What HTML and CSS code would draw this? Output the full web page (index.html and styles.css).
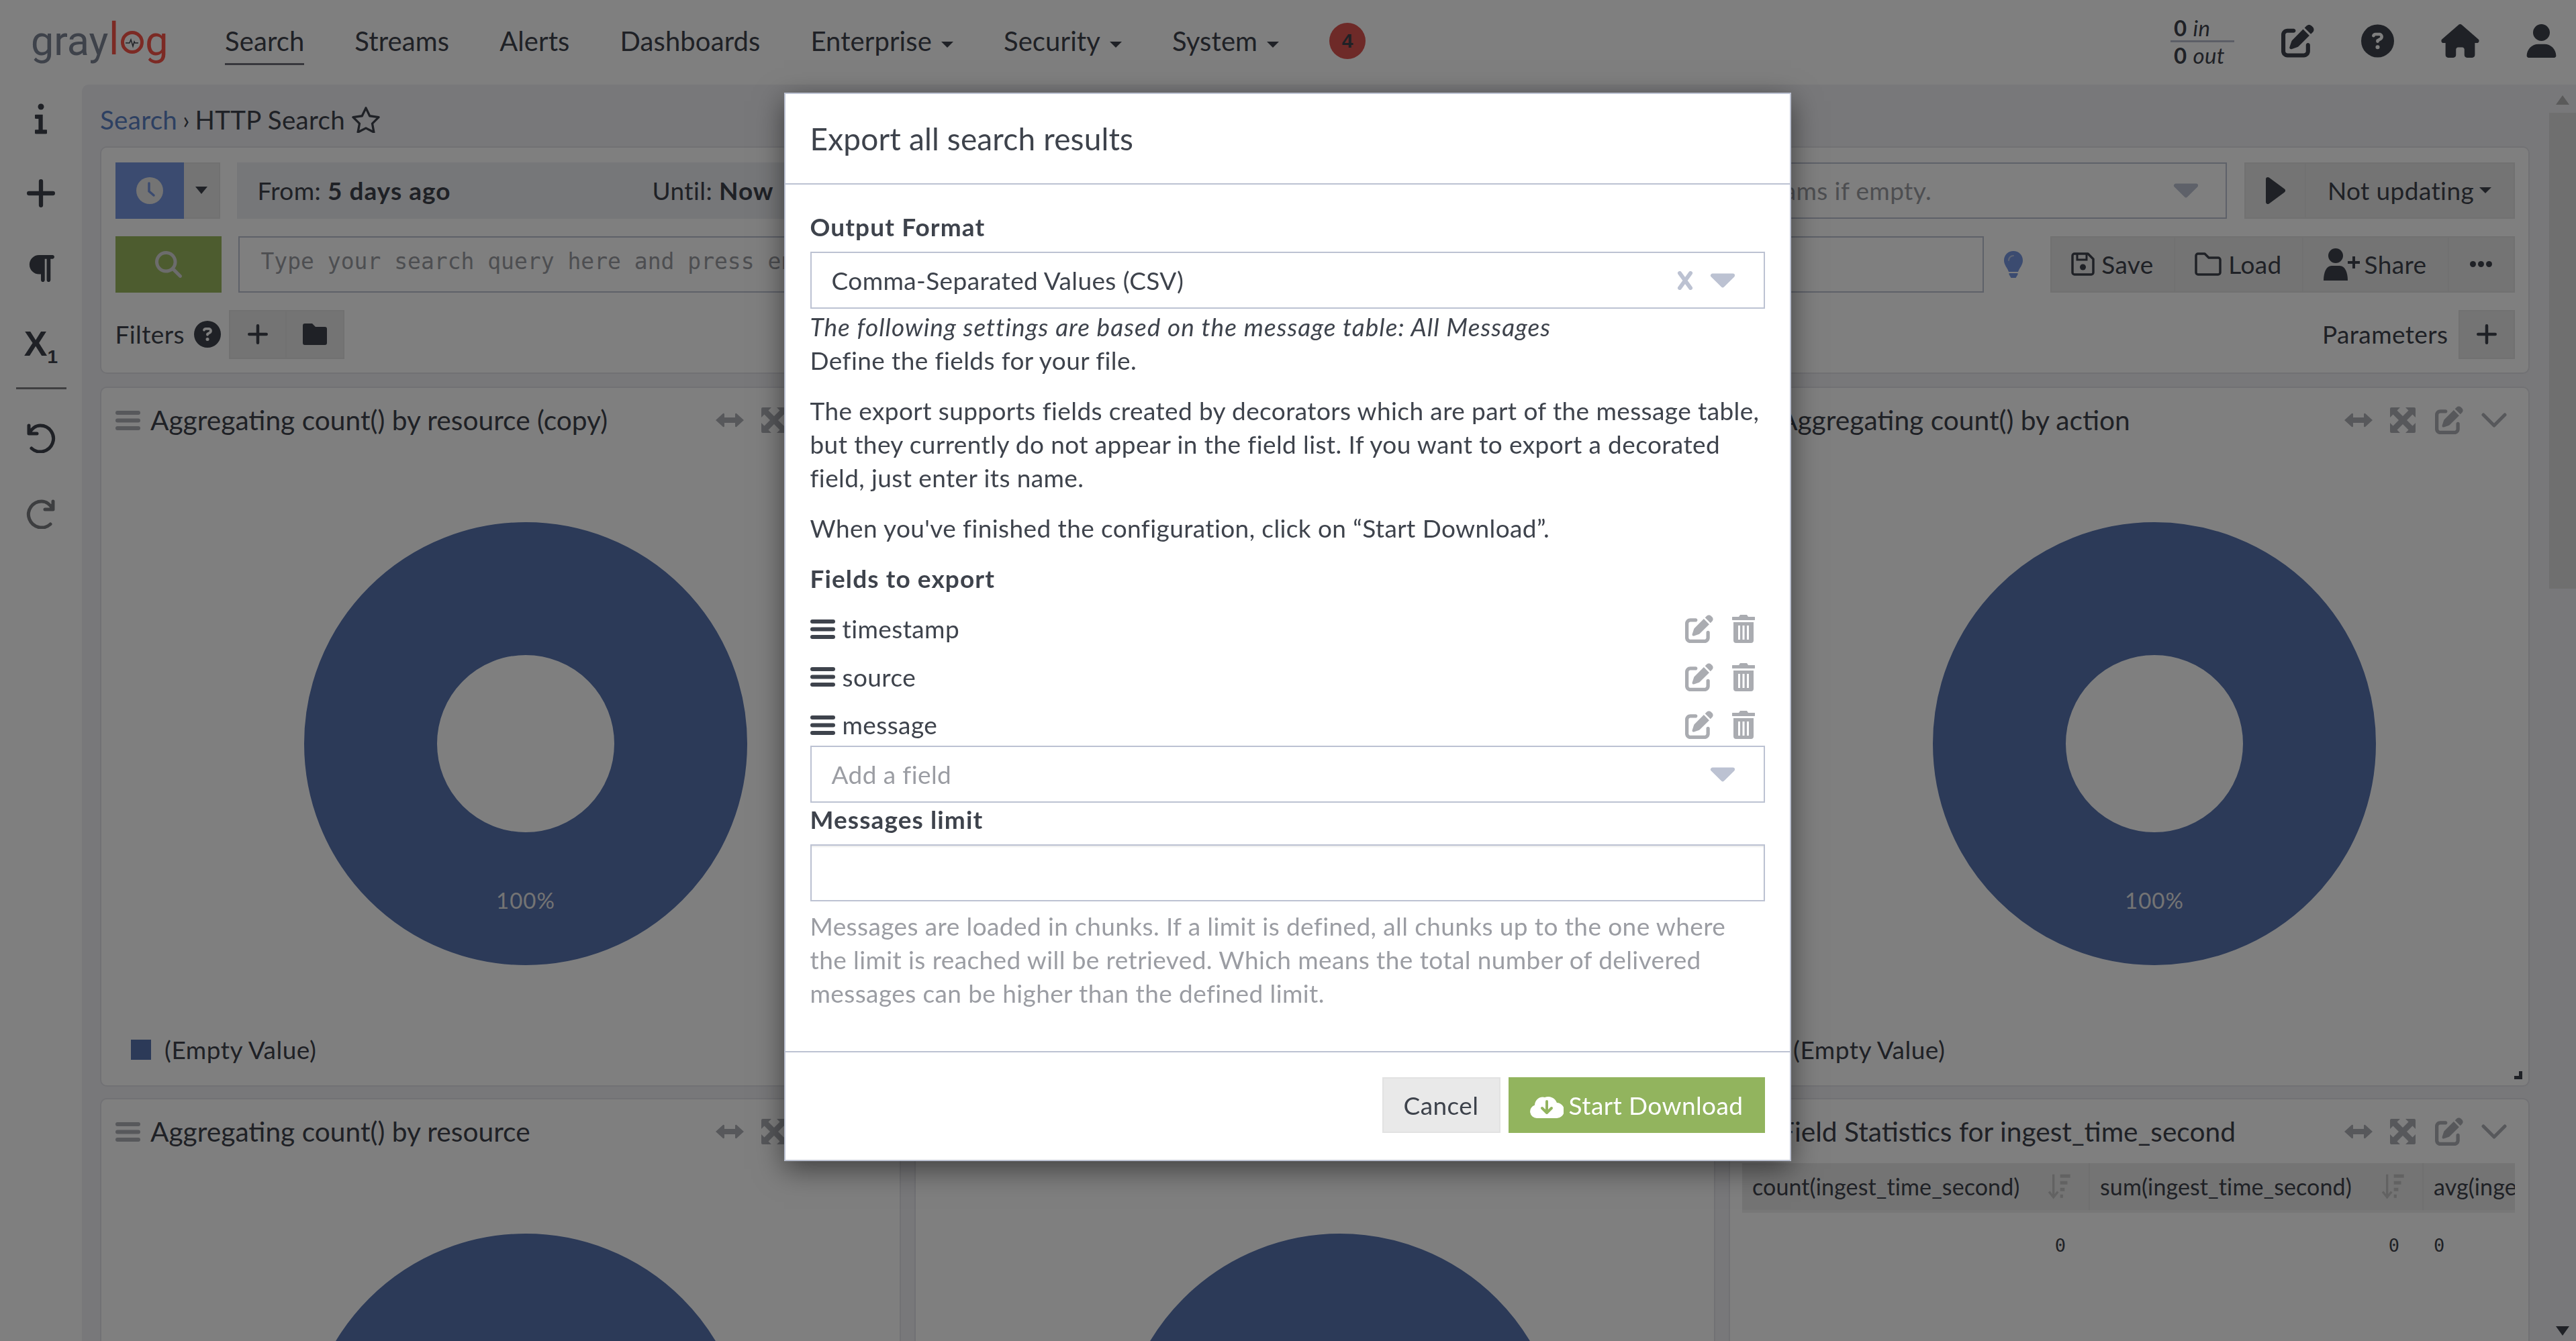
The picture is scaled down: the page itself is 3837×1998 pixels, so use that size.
FILE: index.html
```html
<!DOCTYPE html>
<html lang="en">
<head>
    <meta charset="UTF-8">
    <title>Graylog - HTTP Search</title>
    <link rel="stylesheet" href="styles.css">
</head>
<body>
    <svg class="sprite" xmlns="http://www.w3.org/2000/svg">
        <symbol id="i-edit" viewBox="0 0 512 512"><path d="M471.6 21.7c-21.9-21.9-57.3-21.9-79.2 0L362.3 51.7l97.9 97.9 30.1-30.1c21.9-21.9 21.9-57.3 0-79.2L471.6 21.7zm-299.2 220c-6.1 6.1-10.8 13.6-13.5 21.9l-29.6 88.8c-2.9 8.6-.6 18.1 5.8 24.6s15.9 8.7 24.6 5.8l88.8-29.6c8.2-2.7 15.7-7.4 21.9-13.5L437.7 172.3 339.7 74.3 172.4 241.7zM96 64C43 64 0 107 0 160V416c0 53 43 96 96 96H352c53 0 96-43 96-96V320c0-17.7-14.3-32-32-32s-32 14.3-32 32v96c0 17.7-14.3 32-32 32H96c-17.7 0-32-14.3-32-32V160c0-17.7 14.3-32 32-32h96c17.7 0 32-14.3 32-32s-14.3-32-32-32H96z"/></symbol>
        <symbol id="i-help" viewBox="0 0 512 512"><path d="M256 512A256 256 0 1 0 256 0a256 256 0 1 0 0 512zM169.8 165.3c7.9-22.3 29.1-37.3 52.8-37.3h58.3c34.9 0 63.1 28.3 63.1 63.1c0 22.6-12.1 43.5-31.7 54.8L280 264.4c-.2 13-10.9 23.6-24 23.6c-13.3 0-24-10.7-24-24V250.5c0-8.6 4.6-16.5 12.1-20.8l44.3-25.4c4.7-2.7 7.6-7.7 7.6-13.1c0-8.4-6.8-15.1-15.1-15.1H222.6c-3.4 0-6.4 2.1-7.5 5.3l-.4 1.2c-4.4 12.5-18.2 19-30.6 14.6s-19-18.2-14.6-30.6l.4-1.2zM224 352a32 32 0 1 1 64 0 32 32 0 1 1 -64 0z"/></symbol>
        <symbol id="i-home" viewBox="0 0 576 512"><path d="M575.8 255.5c0 18-15 32.1-32 32.1h-32l.7 160.2c0 2.7-.2 5.4-.5 8.1V472c0 22.1-17.9 40-40 40H456c-1.1 0-2.2 0-3.3-.1c-1.4 .1-2.8 .1-4.2 .1H416 392c-22.1 0-40-17.9-40-40V448 384c0-17.7-14.3-32-32-32H256c-17.7 0-32 14.3-32 32v64 24c0 22.1-17.9 40-40 40H160 128.1c-1.5 0-3-.1-4.5-.2c-1.2 .1-2.4 .2-3.6 .2H104c-22.1 0-40-17.9-40-40V360c0-.9 0-1.9 .1-2.8V287.6H32c-18 0-32-14-32-32.1c0-9 3-17 10-24L266.4 8c7-7 15-8 22-8s15 2 21 7L564.8 231.5c8 7 12 15 11 24z"/></symbol>
        <symbol id="i-user" viewBox="0 0 448 512"><path d="M224 256A128 128 0 1 0 224 0a128 128 0 1 0 0 256zm-45.7 48C79.8 304 0 383.8 0 482.3C0 498.7 13.3 512 29.7 512H418.3c16.4 0 29.7-13.3 29.7-29.7C448 383.8 368.2 304 269.7 304H178.3z"/></symbol>
        <symbol id="i-search" viewBox="0 0 512 512"><path d="M416 208c0 45.9-14.9 88.3-40 122.7L502.6 457.4c12.5 12.5 12.5 32.8 0 45.3s-32.8 12.5-45.3 0L330.7 376c-34.4 25.2-76.8 40-122.7 40C93.1 416 0 322.9 0 208S93.1 0 208 0S416 93.1 416 208zM208 352a144 144 0 1 0 0-288 144 144 0 1 0 0 288z"/></symbol>
        <symbol id="i-para" viewBox="0 0 448 512"><path d="M192 32h64H416c17.7 0 32 14.3 32 32s-14.3 32-32 32H384l0 352c0 17.7-14.3 32-32 32s-32-14.3-32-32l0-352H288l0 352c0 17.7-14.3 32-32 32s-32-14.3-32-32l0-96H192c-88.4 0-160-71.6-160-160s71.6-160 160-160z"/></symbol>
        <symbol id="i-info" viewBox="0 0 40 100"><circle cx="20" cy="10" r="10"/><path d="M4 36h22v50h10a7 7 0 0 1 0 14H4a7 7 0 0 1 0-14h8V50H4a7 7 0 0 1 0-14z"/></symbol>
        <symbol id="i-plus" viewBox="0 0 40 40"><path d="M20 3v34M3 20h34" fill="none" stroke="currentColor" stroke-width="6" stroke-linecap="round"/></symbol>
        <symbol id="i-bars" viewBox="0 0 37 29"><rect width="37" height="6" rx="3"/><rect y="11.500" width="37" height="6" rx="3"/><rect y="23" width="37" height="6" rx="3"/></symbol>
        <symbol id="i-trash" viewBox="0 0 34 42"><path d="M12 0h10l2 3h9a1.500 1.500 0 0 1 0 5H1a1.500 1.500 0 0 1 0-5h9zM2 11h30v27a4 4 0 0 1-4 4H6a4 4 0 0 1-4-4zM9 16v21h3V16zm6.500 0v21h3V16zM22 16v21h3V16z" fill-rule="evenodd"/></symbol>
        <symbol id="i-arrows" viewBox="0 0 44 24"><path d="M1 12 12 2a1.500 1.500 0 0 1 2 1v5h16V3a1.500 1.500 0 0 1 2-1l11 10-11 10a1.500 1.500 0 0 1-2-1v-5H14v5a1.500 1.500 0 0 1-2 1z"/></symbol>
        <symbol id="i-expand" viewBox="0 0 38 38"><path d="M2 0h13L10.500 4.500 19 13l8.500-8.500L23 0h13a2 2 0 0 1 2 2v13l-4.500-4.500L25 19l8.500 8.500L38 23v13a2 2 0 0 1-2 2H23l4.500-4.500L19 25l-8.500 8.500L15 38H2a2 2 0 0 1-2-2V23l4.500 4.500L13 19 4.500 10.500 0 15V2a2 2 0 0 1 2-2z"/></symbol>
        <symbol id="i-chevron" viewBox="0 0 38 22"><path d="M3 3l16 16L35 3" fill="none" stroke="currentColor" stroke-width="5" stroke-linecap="round" stroke-linejoin="round"/></symbol>
        <symbol id="i-caret" viewBox="0 0 40 24"><path d="M4 4h32L20 20z" stroke="currentColor" stroke-width="6" stroke-linejoin="round"/></symbol>
        <symbol id="i-x" viewBox="0 0 24 28"><path d="M4 3l16 22M20 3L4 25" fill="none" stroke="currentColor" stroke-width="6" stroke-linecap="round"/></symbol>
        <symbol id="i-clock" viewBox="0 0 40 40"><circle cx="20" cy="20" r="20"/><path d="M19 9v12l7 6" fill="none" stroke="#7696e0" stroke-width="3.500" stroke-linecap="round"/></symbol>
        <symbol id="i-folder" viewBox="0 0 36 32"><path d="M3 0h11l5 5h14a3 3 0 0 1 3 3v21a3 3 0 0 1-3 3H3a3 3 0 0 1-3-3V3a3 3 0 0 1 3-3z"/></symbol>
        <symbol id="i-folder-o" viewBox="0 0 40 35"><path d="M5 2h10l6 6h14a3 3 0 0 1 3 3v19a3 3 0 0 1-3 3H5a3 3 0 0 1-3-3V5a3 3 0 0 1 3-3z" fill="none" stroke="currentColor" stroke-width="3.500" stroke-linejoin="round"/></symbol>
        <symbol id="i-save" viewBox="0 0 35 35"><path d="M5 2h20l8 8v20a3 3 0 0 1-3 3H5a3 3 0 0 1-3-3V5a3 3 0 0 1 3-3z" fill="none" stroke="currentColor" stroke-width="3.500" stroke-linejoin="round"/><circle cx="17.500" cy="22" r="4.500"/><path d="M9 3v8h14V3" fill="none" stroke="currentColor" stroke-width="3"/></symbol>
        <symbol id="i-share" viewBox="0 0 54 48"><circle cx="18" cy="11" r="11"/><path d="M0 48c0-12 4-22 12-22h12c8 0 12 10 12 22z"/><path d="M45 12v18M36 21h18" fill="none" stroke="currentColor" stroke-width="4"/></symbol>
        <symbol id="i-bulb" viewBox="0 0 28 40"><path d="M14 0c8 0 14 6 14 14 0 7-5 11-7 17H7C5 25 0 21 0 14 0 6 6 0 14 0z"/><path d="M7.500 33h13v2l-3 5h-7l-3-5z"/><path d="M7 14c0-4 3-7 7-7" fill="none" stroke="#bcc8e8" stroke-width="2" stroke-linecap="round"/></symbol>
        <symbol id="i-play" viewBox="0 0 30 40"><path d="M4 3l23 17L4 37z" stroke="currentColor" stroke-width="6" stroke-linejoin="round"/></symbol>
        <symbol id="i-undo" viewBox="0 0 44 44"><path d="M4 3v12h12M5 14c3-6 9-11 16-11a19.500 19.500 0 1 1-13 34" fill="none" stroke="currentColor" stroke-width="5" stroke-linecap="round" stroke-linejoin="round"/></symbol>
        <symbol id="i-redo" viewBox="0 0 44 44"><path d="M40 3v12H28M39 14c-3-6-9-11-16-11a19.500 19.500 0 1 0 13 34" fill="none" stroke="currentColor" stroke-width="5" stroke-linecap="round" stroke-linejoin="round"/></symbol>
        <symbol id="i-cloud" viewBox="0 0 50 38"><path d="M10 38A10 10 0 0 1 7 18.500 12 12 0 0 1 22 7 14 14 0 0 1 40 15 11.500 11.500 0 0 1 39 38z"/><path d="M25 13v16M18 23l7 7 7-7" fill="none" stroke="#92b45e" stroke-width="4" stroke-linecap="round" stroke-linejoin="round"/></symbol>
        <symbol id="i-sort" viewBox="0 0 40 48"><path d="M10 2v38M2 33l8 10 8-10" fill="none" stroke="currentColor" stroke-width="4"/><path d="M22 2h18v6H22zM22 14h13v6H22zM22 26h8v6h-8zM22 38h5v6h-5z"/></symbol>
    </svg>

    <div class="page">
        <nav class="navbar">
            <a class="logo"><span>gray</span><span class="logo-red logo-l">l</span><svg class="logo-o" viewBox="0 0 34 34"><circle cx="17" cy="17" r="14.500" fill="none" stroke="#f85449" stroke-width="5"/><path d="M7 18h6l2-5 3 10 2-7 1 2h5" fill="none" stroke="#3e434c" stroke-width="1.500"/></svg><span class="logo-red">g</span></a>
            <ul class="nav-items">
                <li class="active">Search</li>
                <li>Streams</li>
                <li>Alerts</li>
                <li>Dashboards</li>
                <li class="dropdown">Enterprise</li>
                <li class="dropdown">Security</li>
                <li class="dropdown">System</li>
            </ul>
            <span class="badge">4</span>
            <div class="nav-right">
                <div class="metrics">
                    <div class="metric metric-in"><b>0</b> <i>in</i></div>
                    <div class="metric"><b>0</b> <i>out</i></div>
                </div>
                <svg class="nav-icon w49"><use href="#i-edit"/></svg>
                <svg class="nav-icon w49"><use href="#i-help"/></svg>
                <svg class="nav-icon w57"><use href="#i-home"/></svg>
                <svg class="nav-icon w45"><use href="#i-user"/></svg>
            </div>
        </nav>

        <div class="below-nav">
            <aside class="sidebar">
                <svg class="side-icon side-info"><use href="#i-info"/></svg>
                <svg class="side-icon side-plus"><use href="#i-plus"/></svg>
                <svg class="side-icon side-para"><use href="#i-para"/></svg>
                <div class="side-sub">X<sub>1</sub></div>
                <hr class="side-rule">
                <svg class="side-icon side-undo"><use href="#i-undo"/></svg>
                <svg class="side-icon side-redo"><use href="#i-redo"/></svg>
            </aside>

            <main class="content">
                <div class="breadcrumb">
                    <a>Search</a>
                    <span class="crumb-sep">&rsaquo;</span>
                    <span>HTTP Search</span>
                    <svg class="star" viewBox="0 0 44 42"><path d="M22 3l6 12.500 14 2-10 10 2.500 13.500L22 34.500 9.500 41 12 27.500l-10-10 14-2z" fill="none" stroke="currentColor" stroke-width="3.500" stroke-linejoin="round"/></svg>
                </div>

                <section class="panel search-bar">
                    <div class="search-row">
                        <div class="btn-group">
                            <button class="btn btn-blue btn-clock"><svg class="ico40"><use href="#i-clock"/></svg></button>
                            <button class="btn btn-caret"><span class="caret"></span></button>
                        </div>
                        <div class="time-range">
                            <span class="time-from">From: <b>5 days ago</b></span>
                            <span>Until: <b>Now</b></span>
                        </div>
                        <div class="input stream-select">
                            <span class="placeholder">Select streams the search should include. Searches in all streams if empty.</span>
                            <svg class="select-caret"><use href="#i-caret"/></svg>
                        </div>
                        <div class="btn-group">
                            <button class="btn btn-play"><svg class="play-ico"><use href="#i-play"/></svg></button>
                            <button class="btn btn-update">Not updating<span class="caret"></span></button>
                        </div>
                    </div>
                    <div class="search-row">
                        <button class="btn btn-green"><svg class="ico40"><use href="#i-search"/></svg></button>
                        <div class="input query-input"><span class="mono">Type your search query here and press enter.</span></div>
                        <div class="bulb-cell"><svg class="bulb"><use href="#i-bulb"/></svg></div>
                        <div class="btn-group">
                            <button class="btn btn-save"><svg class="save-ico"><use href="#i-save"/></svg>Save</button>
                            <button class="btn btn-load"><svg class="load-ico"><use href="#i-folder-o"/></svg>Load</button>
                            <button class="btn btn-share"><svg class="share-ico"><use href="#i-share"/></svg>Share</button>
                            <button class="btn btn-more"><span class="dots"><i></i><i></i><i></i></span></button>
                        </div>
                    </div>
                    <div class="search-row filter-row">
                        <span>Filters</span>
                        <svg class="filter-help"><use href="#i-help"/></svg>
                        <div class="btn-group filter-group">
                            <button class="btn btn-small"><svg class="plus-ico"><use href="#i-plus"/></svg></button>
                            <button class="btn btn-small"><svg class="folder-ico"><use href="#i-folder"/></svg></button>
                        </div>
                        <span class="param-label">Parameters</span>
                        <button class="btn btn-param"><svg class="plus-ico"><use href="#i-plus"/></svg></button>
                    </div>
                </section>

                <div class="widgets">
                    <article class="panel widget">
                        <header class="widget-head">
                            <svg class="drag"><use href="#i-bars"/></svg>
                            <h3>Aggregating count() by resource (copy)</h3>
                            <div class="widget-tools">
                                <svg class="t-arrows"><use href="#i-arrows"/></svg>
                                <svg class="t-expand"><use href="#i-expand"/></svg>
                                <svg class="t-edit"><use href="#i-edit"/></svg>
                                <svg class="t-chevron"><use href="#i-chevron"/></svg>
                            </div>
                        </header>
                        <svg class="donut" viewBox="0 0 660 660"><circle cx="330" cy="330" r="231" fill="none" stroke="#5874b0" stroke-width="198"/><text x="330" y="576" text-anchor="middle">100%</text></svg>
                        <div class="legend"><span class="legend-box"></span>(Empty Value)</div>
                    </article>
                    <article class="panel widget">
                        <header class="widget-head"></header>
                        <svg class="donut" viewBox="0 0 660 660"><circle cx="330" cy="330" r="231" fill="none" stroke="#5874b0" stroke-width="198"/></svg>
                    </article>
                    <article class="panel widget">
                        <header class="widget-head">
                            <svg class="drag"><use href="#i-bars"/></svg>
                            <h3>Aggregating count() by action</h3>
                            <div class="widget-tools">
                                <svg class="t-arrows"><use href="#i-arrows"/></svg>
                                <svg class="t-expand"><use href="#i-expand"/></svg>
                                <svg class="t-edit"><use href="#i-edit"/></svg>
                                <svg class="t-chevron"><use href="#i-chevron"/></svg>
                            </div>
                        </header>
                        <svg class="donut" viewBox="0 0 660 660"><circle cx="330" cy="330" r="231" fill="none" stroke="#5874b0" stroke-width="198"/><text x="330" y="576" text-anchor="middle">100%</text></svg>
                        <div class="legend"><span class="legend-box"></span>(Empty Value)</div>
                        <span class="resize-handle"></span>
                    </article>
                    <article class="panel widget">
                        <header class="widget-head">
                            <svg class="drag"><use href="#i-bars"/></svg>
                            <h3>Aggregating count() by resource</h3>
                            <div class="widget-tools">
                                <svg class="t-arrows"><use href="#i-arrows"/></svg>
                                <svg class="t-expand"><use href="#i-expand"/></svg>
                                <svg class="t-edit"><use href="#i-edit"/></svg>
                                <svg class="t-chevron"><use href="#i-chevron"/></svg>
                            </div>
                        </header>
                        <svg class="donut" viewBox="0 0 660 660"><circle cx="330" cy="330" r="231" fill="none" stroke="#5874b0" stroke-width="198"/></svg>
                    </article>
                    <article class="panel widget">
                        <header class="widget-head"></header>
                        <svg class="donut" viewBox="0 0 660 660"><circle cx="330" cy="330" r="231" fill="none" stroke="#5874b0" stroke-width="198"/></svg>
                    </article>
                    <article class="panel widget">
                        <header class="widget-head">
                            <svg class="drag"><use href="#i-bars"/></svg>
                            <h3>Field Statistics for ingest_time_second</h3>
                            <div class="widget-tools">
                                <svg class="t-arrows"><use href="#i-arrows"/></svg>
                                <svg class="t-expand"><use href="#i-expand"/></svg>
                                <svg class="t-edit"><use href="#i-edit"/></svg>
                                <svg class="t-chevron"><use href="#i-chevron"/></svg>
                            </div>
                        </header>
                        <div class="stats">
                            <div class="stats-head">
                                <div class="stats-cell c1">count(ingest_time_second)<svg class="sort"><use href="#i-sort"/></svg></div>
                                <div class="stats-cell c2">sum(ingest_time_second)<svg class="sort"><use href="#i-sort"/></svg></div>
                                <div class="stats-cell c3">avg(ingest_time_second)</div>
                            </div>
                            <div class="stats-row">
                                <div class="stats-val c1">0</div>
                                <div class="stats-val c2">0</div>
                                <div class="stats-val c3">0</div>
                            </div>
                        </div>
                    </article>
                </div>
            </main>

            <div class="scrollbar">
                <span class="scroll-up"></span>
                <span class="scroll-thumb"></span>
                <span class="scroll-down"></span>
            </div>
        </div>
    </div>

    <div class="backdrop"></div>

    <div class="modal">
        <div class="modal-header"><h4>Export all search results</h4></div>
        <div class="modal-body">
            <label class="field-label">Output Format</label>
            <div class="input select">
                <span>Comma-Separated Values (CSV)</span>
                <svg class="select-x"><use href="#i-x"/></svg>
                <svg class="select-caret"><use href="#i-caret"/></svg>
            </div>
            <p class="intro"><i>The following settings are based on the message table: All Messages</i><br>Define the fields for your file.</p>
            <p>The export supports fields created by decorators which are part of the message table,<br>but they currently do not appear in the field list. If you want to export a decorated<br>field, just enter its name.</p>
            <p>When you've finished the configuration, click on “Start Download”.</p>
            <label class="field-label fields-label">Fields to export</label>
            <div class="field-row">
                <svg class="field-bars"><use href="#i-bars"/></svg><span>timestamp</span>
                <svg class="field-edit"><use href="#i-edit"/></svg><svg class="field-trash"><use href="#i-trash"/></svg>
            </div>
            <div class="field-row">
                <svg class="field-bars"><use href="#i-bars"/></svg><span>source</span>
                <svg class="field-edit"><use href="#i-edit"/></svg><svg class="field-trash"><use href="#i-trash"/></svg>
            </div>
            <div class="field-row">
                <svg class="field-bars"><use href="#i-bars"/></svg><span>message</span>
                <svg class="field-edit"><use href="#i-edit"/></svg><svg class="field-trash"><use href="#i-trash"/></svg>
            </div>
            <div class="input select add-field">
                <span class="placeholder">Add a field</span>
                <svg class="select-caret"><use href="#i-caret"/></svg>
            </div>
            <label class="field-label">Messages limit</label>
            <div class="input limit-input"></div>
            <p class="help">Messages are loaded in chunks. If a limit is defined, all chunks up to the one where<br>the limit is reached will be retrieved. Which means the total number of delivered<br>messages can be higher than the defined limit.</p>
        </div>
        <div class="modal-footer">
            <button class="btn btn-cancel">Cancel</button>
            <button class="btn btn-download"><svg class="cloud"><use href="#i-cloud"/></svg>Start Download</button>
        </div>
    </div>
</body>
</html>
```

FILE: styles.css
```css
:root {
    --text: #3e434c;
    --line: #bcc2d2;
    --btn: #e9e9e9;
    --btn-line: #e2e2e2;
    --muted: #9b9da3;
    --blue: #5874b0;
    --tool: #aeb0b6;
}

* {
    box-sizing: border-box;
}

html, body {
    margin: 0;
    height: 1998px;
    overflow: hidden;
}

body {
    font-family: "Lato", "Noto Sans", sans-serif;
    font-size: 37px;
    line-height: 50px;
    letter-spacing: 0.4px;
    color: var(--text);
    background: #fff;
}

b {
    letter-spacing: 1px;
}

.sprite {
    display: none;
}

svg {
    fill: currentColor;
    flex: none;
}

button {
    font: inherit;
    letter-spacing: inherit;
    color: inherit;
}

/* navbar */
.navbar {
    height: 126px;
    display: flex;
    align-items: center;
    padding: 0 29px 4px 46px;
    background: #fff;
}

.logo {
    display: flex;
    align-items: center;
    width: 202px;
    margin-right: 87px;
    font-family: "Roboto", sans-serif;
    font-size: 61px;
    line-height: 64px;
    letter-spacing: 0;
    color: #7d8494;
}

.logo-red {
    color: #f85449;
}

.logo-l {
    margin-left: 1px;
    transform: scaleY(1.08);
    transform-origin: bottom;
}

.logo-o {
    width: 34px;
    height: 34px;
    margin: 3px 2px 0 3px;
}

.nav-items {
    display: flex;
    gap: 75px;
    list-style: none;
    margin: 0;
    padding: 0;
    font-size: 40px;
    letter-spacing: 0.1px;
}

.nav-items li {
    height: 72px;
    padding-top: 11px;
    white-space: nowrap;
}

.nav-items .active {
    border-bottom: 3px solid #6e6e78;
}

.dropdown::after {
    content: '';
    display: inline-block;
    margin-left: 14px;
    vertical-align: 5px;
    border-top: 9px solid currentColor;
    border-left: 9px solid transparent;
    border-right: 9px solid transparent;
}

.badge {
    width: 54px;
    height: 54px;
    margin-left: 75px;
    border-radius: 50%;
    background: #dc5450;
    font-family: "Liberation Sans", sans-serif;
    font-weight: 700;
    font-size: 30px;
    line-height: 54px;
    letter-spacing: 0;
    text-align: center;
}

.nav-right {
    margin-left: auto;
    display: flex;
    align-items: center;
    gap: 70px;
}

.metrics {
    width: 95px;
    font-size: 33px;
    line-height: 38px;
}

.metric {
    padding-left: 5px;
}

.metric-in {
    border-bottom: 3px solid #b8bdcc;
}

.metric b {
    letter-spacing: 0.4px;
}

.nav-icon {
    height: 50px;
}

.w49 { width: 49px; }
.w57 { width: 57px; }
.w45 { width: 45px; }

/* below the navbar */
.below-nav {
    display: flex;
    height: 1872px;
}

.sidebar {
    width: 122px;
    flex: none;
    display: flex;
    flex-direction: column;
    align-items: center;
    background: #fff;
    padding-top: 27px;
}

.side-icon {
    display: block;
}

.side-info { width: 18px; height: 48px; }
.side-plus { width: 42px; height: 42px; margin-top: 66px; }
.side-para { width: 40px; height: 46px; margin-top: 68px; }
.side-sub {
    margin-top: 53px;
    height: 72px;
    font-family: "Liberation Sans", sans-serif;
    font-size: 52px;
    line-height: 72px;
    letter-spacing: 0;
    font-weight: 700;
}

.side-sub sub {
    font-size: 28px;
    line-height: 0;
}

.side-rule {
    width: 75px;
    height: 3px;
    margin: 29px 0 0;
    border: 0;
    background: #7e7e82;
}

.side-undo { width: 44px; height: 44px; margin-top: 51px; }
.side-redo { width: 44px; height: 44px; margin-top: 69px; color: #7b7d80; }

.content {
    flex: 1;
    min-width: 0;
    overflow: hidden;
    padding: 0 29px 0 27px;
    background: #f0f0f5;
    border-top-left-radius: 10px;
}

.breadcrumb {
    display: flex;
    align-items: center;
    height: 92px;
    gap: 8px;
    font-size: 38.5px;
    letter-spacing: 0.3px;
    padding-top: 12px;
}

.breadcrumb a {
    color: #5b80c4;
}

.crumb-sep {
    font-size: 36px;
}

.star {
    width: 42px;
    height: 40px;
    margin-left: 2px;
}

.panel {
    background: #fff;
    border: 2.5px solid #e3e3e8;
    border-radius: 10px;
}

.search-bar {
    padding: 21.5px 20.5px 20px;
}

.search-row {
    display: flex;
    margin-bottom: 26px;
}

.search-row:last-child {
    margin-bottom: 0;
}

.btn-group {
    display: flex;
    flex: none;
}

.btn {
    display: flex;
    align-items: center;
    justify-content: center;
    height: 84px;
    margin: 0;
    padding: 0;
    background: var(--btn);
    border: 2px solid var(--btn-line);
}

.btn-group .btn + .btn {
    border-left: 0;
}

.btn-blue {
    width: 102px;
    background: #7696e0;
    border-color: #7696e0;
    color: #e8e8e8;
}

.btn-caret {
    width: 54px;
}

.caret {
    display: block;
    border-top: 11px solid var(--text);
    border-left: 9px solid transparent;
    border-right: 9px solid transparent;
}

.ico40 {
    width: 40px;
    height: 40px;
}

.time-range {
    display: flex;
    width: 1249px;
    margin-left: 25px;
    padding-left: 31px;
    align-items: center;
    background: #eceef2;
}

.time-from {
    width: 588px;
}

.input {
    display: flex;
    align-items: center;
    border: 2.5px solid var(--line);
    background: #fff;
}

.stream-select {
    flex: 1;
    height: 84px;
    margin: 0 26px 0 25px;
    padding: 0 40px 0 30px;
    justify-content: space-between;
    white-space: nowrap;
}

.placeholder {
    color: var(--muted);
}

.select-caret {
    width: 38px;
    height: 24px;
    color: var(--line);
}

.btn-play {
    width: 92px;
}

.play-ico {
    width: 30px;
    height: 40px;
}

.btn-update {
    width: 311px;
    gap: 8px;
}

.btn-update .caret {
    border-top-width: 9px;
}

.btn-green {
    width: 158px;
    background: #9ab85e;
    border-color: #9ab85e;
    color: #d8d8d8;
}

.query-input {
    flex: 1;
    min-width: 0;
    height: 84px;
    margin-left: 25px;
    padding: 0 0 8px 32px;
    overflow: hidden;
    white-space: nowrap;
}

.mono {
    font-family: "DejaVu Sans Mono", monospace;
    font-size: 33px;
    letter-spacing: 0;
    color: var(--muted);
}

.bulb-cell {
    width: 99px;
    flex: none;
    padding-right: 10px;
    display: flex;
    align-items: center;
    justify-content: center;
    color: #7696e0;
}

.bulb {
    width: 28px;
    height: 40px;
}

.btn-save { width: 186px; gap: 10px; }
.btn-load { width: 191px; gap: 10px; }
.btn-share { width: 217px; gap: 6px; }
.btn-more { width: 98px; }

.save-ico {
    width: 35px;
    height: 35px;
}

.load-ico {
    width: 40px;
    height: 35px;
}

.share-ico {
    width: 54px;
    height: 48px;
}

.dots {
    display: flex;
    gap: 3px;
}

.dots i {
    width: 9px;
    height: 9px;
    border-radius: 50%;
    background: var(--text);
}

.filter-row {
    align-items: center;
    height: 73px;
}

.filter-help {
    width: 40px;
    height: 40px;
    margin-left: 14px;
}

.filter-group {
    margin-left: 12px;
}

.btn-small {
    width: 86px;
    height: 73px;
}

.plus-ico {
    width: 30px;
    height: 30px;
}

.folder-ico {
    width: 36px;
    height: 32px;
}

.param-label {
    margin-left: auto;
    margin-right: 15px;
}

.btn-param {
    width: 84px;
    height: 73px;
}

/* widgets */
.widgets {
    display: grid;
    grid-template-columns: repeat(3, 1fr);
    grid-auto-rows: 1043px;
    gap: 17px 20px;
    margin-top: 19px;
}

.widget {
    position: relative;
    overflow: hidden;
}

.widget-head {
    display: flex;
    align-items: center;
    height: 50px;
    margin: 23.5px 32px 0 21px;
}

.widget-head h3 {
    margin: 0;
    font-size: 40.7px;
    font-weight: 400;
    letter-spacing: 0;
    white-space: nowrap;
}

.drag {
    width: 37px;
    height: 29px;
    margin-right: 15px;
    color: var(--tool);
}

.widget-tools {
    margin-left: auto;
    display: flex;
    align-items: center;
    color: var(--tool);
}

.t-arrows { width: 44px; height: 24px; margin-right: 25px; }
.t-expand { width: 38px; height: 38px; margin-right: 29px; }
.t-edit { width: 42px; height: 42px; margin-right: 27px; }
.t-chevron { width: 38px; height: 22px; }

.donut {
    display: block;
    width: 660px;
    height: 660px;
    margin: 127px 0 0 302px;
}

.donut text {
    font-size: 33px;
    letter-spacing: 1px;
    fill: #e8e8e8;
}

.legend {
    display: flex;
    align-items: center;
    height: 50px;
    margin: 101px 0 0 44px;
    letter-spacing: 0.5px;
}

.legend-box {
    width: 30px;
    height: 30px;
    margin-right: 20px;
    background: var(--blue);
}

.resize-handle {
    position: absolute;
    right: 9px;
    bottom: 9px;
    width: 12px;
    height: 12px;
    border-right: 5px solid #3e434c;
    border-bottom: 5px solid #3e434c;
}

.stats {
    margin: 22px 20px 0 18px;
    overflow: hidden;
    font-size: 34px;
    letter-spacing: 0.1px;
}

.stats-head {
    display: flex;
    height: 74px;
    background: #e8e8e8;
    border-bottom: 4px solid #eeeeee;
    white-space: nowrap;
}

.stats-row {
    display: flex;
    margin-top: 24px;
}

.stats-cell {
    display: flex;
    align-items: center;
    justify-content: space-between;
    flex: none;
    padding: 0 27px 0 15px;
    overflow: hidden;
    border-right: 2px solid #e0e0e0;
}

.c1 { width: 518px; }
.c2 { width: 497px; }
.c3 { width: 300px; }

.sort {
    width: 34px;
    height: 40px;
    color: #c4c4c4;
}

.stats-val {
    flex: none;
    padding-right: 36px;
    text-align: right;
    font-family: "DejaVu Sans Mono", monospace;
    font-size: 27px;
    letter-spacing: 0;
}

.stats-val.c3 {
    padding: 0 0 0 15px;
    text-align: left;
}

/* scrollbar */
.scrollbar {
    width: 40px;
    flex: none;
    display: flex;
    flex-direction: column;
    align-items: center;
    background: #f0f0f5;
    padding-top: 16px;
}

.scroll-up {
    border-bottom: 14px solid #b5b5b5;
    border-left: 10px solid transparent;
    border-right: 10px solid transparent;
}

.scroll-thumb {
    width: 40px;
    height: 709px;
    margin-top: 12px;
    background: #dedede;
}

.scroll-down {
    margin-top: auto;
    margin-bottom: 8px;
    border-top: 14px solid #3e434c;
    border-left: 10px solid transparent;
    border-right: 10px solid transparent;
}

/* modal */
.backdrop {
    position: fixed;
    inset: 0;
    background: rgba(0, 0, 0, 0.5);
}

.modal {
    position: absolute;
    top: 138px;
    left: 1167.5px;
    width: 1500px;
    background: #fff;
    border: 2.5px solid var(--line);
    box-shadow: 0 12px 40px rgba(0, 0, 0, 0.5);
}

.modal-header {
    height: 135px;
    display: flex;
    align-items: center;
    padding: 0 37px;
    border-bottom: 2.5px solid var(--line);
}

.modal-header h4 {
    margin: 0;
    font-size: 46px;
    font-weight: 400;
    letter-spacing: 0.15px;
}

.modal-body {
    padding: 38px 37px 36px;
}

.field-label {
    display: block;
    font-weight: 700;
    letter-spacing: 1.1px;
    margin-bottom: 12px;
}

.select {
    height: 85px;
    padding: 0 42px 0 30px;
}

.select span:first-child {
    margin-right: auto;
}

.select-x {
    width: 24px;
    height: 28px;
    margin-right: 25px;
    color: var(--line);
}

p {
    margin: 0 0 25px;
}

.intro {
    margin-top: 2px;
}

.intro i {
    letter-spacing: 1.05px;
}

.fields-label {
    margin-bottom: 25px;
}

.field-row {
    display: flex;
    align-items: center;
    height: 50px;
    margin-bottom: 21.5px;
}

.field-row span {
    margin-right: auto;
}

.field-bars {
    width: 37px;
    height: 29px;
    margin-right: 11px;
}

.field-edit {
    width: 42px;
    height: 42px;
    color: #aaacb1;
}

.field-trash {
    width: 34px;
    height: 42px;
    margin: 0 15px 0 28px;
    color: #aaacb1;
}

.add-field {
    margin-top: -15.5px;
}

.limit-input {
    height: 85px;
    box-shadow: inset 0 2px 2px rgba(0, 0, 0, 0.08);
}

.help {
    margin: 12px 0 25px;
    color: var(--muted);
}

.modal-footer {
    display: flex;
    justify-content: flex-end;
    gap: 12px;
    padding: 37px 37px 40px;
    border-top: 2.5px solid var(--line);
}

.btn-cancel {
    width: 176px;
    height: 83px;
}

.btn-download {
    width: 382px;
    height: 83px;
    gap: 8px;
    color: #fff;
    background: #92b45e;
    border-color: #92b45e;
}

.cloud {
    width: 50px;
    height: 38px;
}
```
